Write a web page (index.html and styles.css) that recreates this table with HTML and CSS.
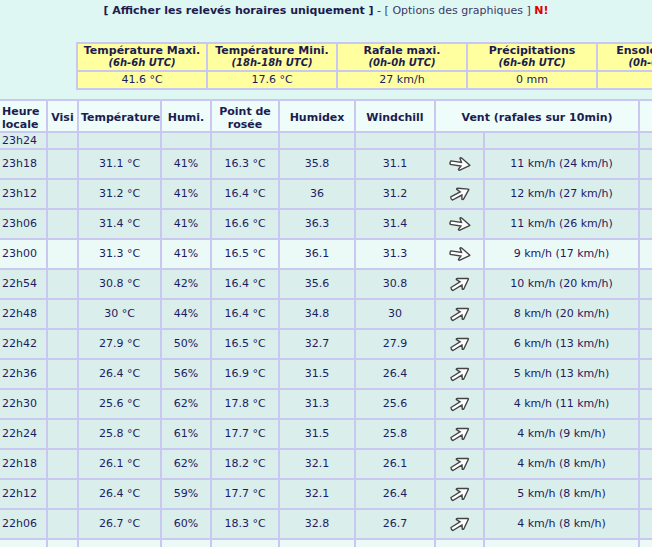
FILE: index.html
```html
<!DOCTYPE html>
<html lang="fr">
<head>
<meta charset="utf-8">
<title>Relevés</title>
<link rel="stylesheet" href="styles.css">
</head>
<body>
<svg class="defs" width="0" height="0" aria-hidden="true">
  <defs>
    <path id="arr" d="M2.5,6.2 H13.2 L11.2,2.4 Q11.6,1.4 12.8,1.9 L21.6,7.6 Q22.2,8 21.6,8.4 L12.8,14.1 Q11.6,14.6 11.2,13.6 L13.2,9.8 H2.5 Q1.3,8 2.5,6.2 Z"/>
  </defs>
</svg>
<p class="toplinks"><b class="strong">[ Afficher les relevés horaires uniquement ]</b> - <span class="opt">[ Options des graphiques ]</span> <b class="new">N!</b></p>

<table class="summary">
  <tr class="sh">
    <th>Température Maxi.<br><i>(6h-6h UTC)</i></th>
    <th>Température Mini.<br><i>(18h-18h UTC)</i></th>
    <th>Rafale maxi.<br><i>(0h-0h UTC)</i></th>
    <th>Précipitations<br><i>(6h-6h UTC)</i></th>
    <th>Ensoleillement<br><i>(0h-0h UTC)</i></th>
  </tr>
  <tr class="sd">
    <td>41.6 °C</td>
    <td>17.6 °C</td>
    <td>27 km/h</td>
    <td>0 mm</td>
    <td></td>
  </tr>
</table>

<table class="data">
  <colgroup>
    <col class="c1"><col class="c2"><col class="c3"><col class="c4"><col class="c5"><col class="c6"><col class="c7"><col class="c8"><col class="c9"><col class="c10">
  </colgroup>
  <tr class="head">
    <th class="left">Heure<br>locale</th>
    <th>Visi</th>
    <th>Température</th>
    <th>Humi.</th>
    <th>Point de<br>rosée</th>
    <th>Humidex</th>
    <th>Windchill</th>
    <th colspan="2">Vent (rafales sur 10min)</th>
    <th></th>
  </tr>
  <tr class="first">
    <td class="left">23h24</td><td></td><td></td><td></td><td></td><td></td><td></td><td></td><td></td><td></td>
  </tr>
  <tr class="row"><td class="left">23h18</td><td></td><td>31.1 °C</td><td>41%</td><td>16.3 °C</td><td>35.8</td><td>31.1</td><td><svg class="ar" viewBox="0 0 24 16"><use href="#arr" transform="rotate(8 12 8)"/></svg></td><td>11 km/h (24 km/h)</td><td></td></tr>
  <tr class="row"><td class="left">23h12</td><td></td><td>31.2 °C</td><td>41%</td><td>16.4 °C</td><td>36</td><td>31.2</td><td><svg class="ar" viewBox="0 0 24 16"><use href="#arr" transform="rotate(-28 12 8)"/></svg></td><td>12 km/h (27 km/h)</td><td></td></tr>
  <tr class="row"><td class="left">23h06</td><td></td><td>31.4 °C</td><td>41%</td><td>16.6 °C</td><td>36.3</td><td>31.4</td><td><svg class="ar" viewBox="0 0 24 16"><use href="#arr" transform="rotate(8 12 8)"/></svg></td><td>11 km/h (26 km/h)</td><td></td></tr>
  <tr class="row hour"><td class="left">23h00</td><td></td><td>31.3 °C</td><td>41%</td><td>16.5 °C</td><td>36.1</td><td>31.3</td><td><svg class="ar" viewBox="0 0 24 16"><use href="#arr" transform="rotate(8 12 8)"/></svg></td><td>9 km/h (17 km/h)</td><td></td></tr>
  <tr class="row"><td class="left">22h54</td><td></td><td>30.8 °C</td><td>42%</td><td>16.4 °C</td><td>35.6</td><td>30.8</td><td><svg class="ar" viewBox="0 0 24 16"><use href="#arr" transform="rotate(-32 12 8)"/></svg></td><td>10 km/h (20 km/h)</td><td></td></tr>
  <tr class="row"><td class="left">22h48</td><td></td><td>30 °C</td><td>44%</td><td>16.4 °C</td><td>34.8</td><td>30</td><td><svg class="ar" viewBox="0 0 24 16"><use href="#arr" transform="rotate(-32 12 8)"/></svg></td><td>8 km/h (20 km/h)</td><td></td></tr>
  <tr class="row"><td class="left">22h42</td><td></td><td>27.9 °C</td><td>50%</td><td>16.5 °C</td><td>32.7</td><td>27.9</td><td><svg class="ar" viewBox="0 0 24 16"><use href="#arr" transform="rotate(-32 12 8)"/></svg></td><td>6 km/h (13 km/h)</td><td></td></tr>
  <tr class="row"><td class="left">22h36</td><td></td><td>26.4 °C</td><td>56%</td><td>16.9 °C</td><td>31.5</td><td>26.4</td><td><svg class="ar" viewBox="0 0 24 16"><use href="#arr" transform="rotate(-32 12 8)"/></svg></td><td>5 km/h (13 km/h)</td><td></td></tr>
  <tr class="row"><td class="left">22h30</td><td></td><td>25.6 °C</td><td>62%</td><td>17.8 °C</td><td>31.3</td><td>25.6</td><td><svg class="ar" viewBox="0 0 24 16"><use href="#arr" transform="rotate(-32 12 8)"/></svg></td><td>4 km/h (11 km/h)</td><td></td></tr>
  <tr class="row"><td class="left">22h24</td><td></td><td>25.8 °C</td><td>61%</td><td>17.7 °C</td><td>31.5</td><td>25.8</td><td><svg class="ar" viewBox="0 0 24 16"><use href="#arr" transform="rotate(-32 12 8)"/></svg></td><td>4 km/h (9 km/h)</td><td></td></tr>
  <tr class="row"><td class="left">22h18</td><td></td><td>26.1 °C</td><td>62%</td><td>18.2 °C</td><td>32.1</td><td>26.1</td><td><svg class="ar" viewBox="0 0 24 16"><use href="#arr" transform="rotate(-32 12 8)"/></svg></td><td>4 km/h (8 km/h)</td><td></td></tr>
  <tr class="row"><td class="left">22h12</td><td></td><td>26.4 °C</td><td>59%</td><td>17.7 °C</td><td>32.1</td><td>26.4</td><td><svg class="ar" viewBox="0 0 24 16"><use href="#arr" transform="rotate(-32 12 8)"/></svg></td><td>5 km/h (8 km/h)</td><td></td></tr>
  <tr class="row"><td class="left">22h06</td><td></td><td>26.7 °C</td><td>60%</td><td>18.3 °C</td><td>32.8</td><td>26.7</td><td><svg class="ar" viewBox="0 0 24 16"><use href="#arr" transform="rotate(-32 12 8)"/></svg></td><td>4 km/h (8 km/h)</td><td></td></tr>
  <tr class="row hour"><td class="left">22h00</td><td></td><td>26.9 °C</td><td>60%</td><td>18.5 °C</td><td>33.1</td><td>26.9</td><td><svg class="ar" viewBox="0 0 24 16"><use href="#arr" transform="rotate(-32 12 8)"/></svg></td><td>4 km/h (8 km/h)</td><td></td></tr>
</table>
</body>
</html>
```

FILE: styles.css
```css
html {
  overflow: hidden;
}
body {
  margin: 0;
  background: #dff7f3;
  font-family: "DejaVu Sans", Verdana, sans-serif;
  font-size: 11px;
  color: #1c1c5e;
  width: 900px;
}
.defs {
  position: absolute;
  width: 0;
  height: 0;
}
.toplinks {
  width: 652px;
  margin: 4px 0 0 0;
  text-align: center;
  line-height: 14px;
  color: #2a2a60;
}
.toplinks .strong {
  color: #1c1c4e;
}
.toplinks .opt {
  color: #3a3a68;
}
.toplinks .new {
  color: #e00000;
}

.summary {
  margin: 24px 0 0 76px;
  border-spacing: 2px;
  background: #c8c8f0;
  table-layout: fixed;
  width: 652px;
}
.summary th, .summary td {
  background: #ffff9f;
  width: 124px;
  text-align: center;
  padding: 1px 2px;
  white-space: nowrap;
  overflow: hidden;
}
.summary th {
  font-weight: bold;
  line-height: 12px;
  height: 23px;
  color: #1c1c4e;
}
.summary th i {
  font-size: 10px;
}
.summary td {
  height: 14px;
  line-height: 14px;
}

.data {
  margin: 9px 0 0 -2px;
  border-spacing: 2px;
  background: #c8c8f0;
  table-layout: fixed;
  width: 744px;
}
.c1 { width: 46px; }
.c2 { width: 29px; }
.c3 { width: 81px; }
.c4 { width: 48px; }
.c5 { width: 66px; }
.c6 { width: 74px; }
.c7 { width: 78px; }
.c8 { width: 47px; }
.c9 { width: 153px; }
.c10 { width: 100px; }

.data th, .data td {
  padding: 0 2px;
  text-align: center;
  white-space: nowrap;
  overflow: hidden;
}
.data th {
  background: #eefcfa;
  font-weight: bold;
  line-height: 13px;
  height: 27px;
  padding-top: 3px;
  color: #1c1c4e;
}
.data td {
  background: #daeeec;
}
.data .left {
  text-align: left;
}
.data .first td {
  height: 15px;
  line-height: 15px;
}
.data .row td {
  height: 28px;
  line-height: 14px;
}
.data .hour td {
  background: #ebf9f7;
}
.ar {
  display: block;
  margin: 0 auto;
  width: 24px;
  height: 16px;
  overflow: visible;
}
.ar use {
  fill: #ffffff;
  stroke: #444444;
  stroke-width: 1.4;
}
```
